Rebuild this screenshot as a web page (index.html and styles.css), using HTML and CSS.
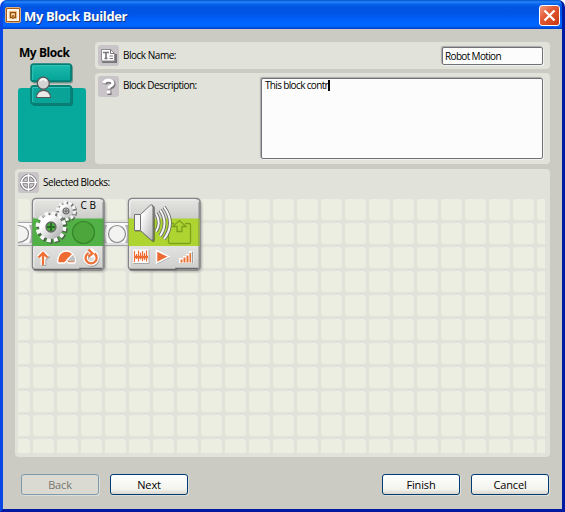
FILE: index.html
```html
<!DOCTYPE html>
<html lang="en">
<head>
<meta charset="utf-8">
<title>My Block Builder</title>
<link rel="stylesheet" href="styles.css">
</head>
<body>
<div class="window">
  <header class="titlebar">
    <svg class="app-icon" width="16" height="16" viewBox="0 0 16 16"><rect x=".5" y=".5" width="15" height="15" rx="1.5" fill="#a85b16" stroke="#dcae80"/><rect x="2.8" y="2.8" width="10.4" height="10.4" fill="#ffe1b1" stroke="#fff" stroke-width="1.5"/><path d="M7 10.500H5.500v-5h5v5H9M8 8v4" fill="none" stroke="#98500d" stroke-width="1.5"/></svg>
    <h1 class="title">My Block Builder</h1>
    <button class="close" aria-label="Close"><svg width="21" height="21" viewBox="0 0 21 21"><path d="M5.500 5.500l10 10M15.500 5.500l-10 10" stroke="#fff" stroke-width="2.2"/></svg></button>
  </header>
  <main class="content">
    <section class="top">
      <div class="preview">
        <h2 class="preview-name">My Block</h2>
        <div class="preview-tile">
          <svg class="preview-art" width="46" height="46" viewBox="0 0 46 46">
            <defs><linearGradient id="teal" x2="0" y2="1"><stop stop-color="#1cbcaf"/><stop offset="1" stop-color="#05a397"/></linearGradient></defs>
            <rect x="2" y="2" width="41" height="18.500" rx="3" fill="#52776f" opacity=".6"/><rect x="2" y="24" width="41" height="19" rx="3" fill="#085e58" opacity=".6"/>
            <rect x="1.200" y="1.200" width="40" height="17" rx="2.500" fill="url(#teal)" stroke="#087e75" stroke-width="2"/>
            <rect x="1.200" y="23" width="40" height="18" rx="2.500" fill="#0aa397" stroke="#087e75" stroke-width="2"/>
            <path d="M2.700 17V2.700H40M2.700 39V24.500H40" fill="none" stroke="#35c9bd" stroke-width=".9"/>
            <path d="M6.500 34.500c0-9.500 14-9.500 14 0z" fill="#e9e9e9" stroke="#555" stroke-width="1.200"/><circle cx="13.300" cy="20.200" r="6" fill="#d4d4d4" stroke="#555" stroke-width="1.200"/><path d="M10 18q3-4 6.500 0" stroke="#f5f5f5" stroke-width="2" fill="none"/>
          </svg>
        </div>
      </div>
      <div class="fields">
        <div class="panel name-panel">
          <span class="icon-box"><svg width="21" height="21" viewBox="0 0 21 21"><path d="M4 17h14V9" fill="none" stroke="#77747a" stroke-width="2"/><path d="M3.500 4.500h9l4 4v7.500h-13z" fill="#fff" stroke="#918e91"/><path d="M12.500 4.500v4h4" fill="none" stroke="#77757a"/><path d="M5 7.500h6M8 7v6.500M6.500 13.500h3" fill="none" stroke="#77757a" stroke-width="1.600"/><path d="M11.500 11h3.500M11.500 13.500h3.500" stroke="#77757a"/></svg></span>
          <label class="label" for="name">Block Name:</label>
          <input class="name-input" id="name" value="Robot Motion">
        </div>
        <div class="panel desc-panel">
          <span class="icon-box"><svg width="21" height="21" viewBox="0 0 21 21"><path d="M6.800 8.300q.3-3 4.300-3t4.200 2.700q0 2-2.300 2.800-1.500.7-1.500 2.700M9.500 16.700h4" fill="none" stroke="#77747a" stroke-width="4.600"/><path d="M5.900 7.300q.3-3 4.500-3t4.500 2.800q0 2-2.600 3-1.700.8-1.700 2.600M8.800 16h3.600" fill="none" stroke="#fff" stroke-width="3"/></svg></span>
          <label class="label desc-label" for="desc">Block Description:</label>
          <div class="desc-input" id="desc">This block contr<span class="caret"></span></div>
        </div>
      </div>
    </section>
    <section class="panel selected-panel">
      <div class="selected-head">
        <span class="icon-box"><svg width="21" height="21" viewBox="0 0 21 21"><g fill="none" stroke="#77747a" stroke-width="3.200"><circle cx="10.500" cy="10.500" r="7"/><path d="M10.500 2v17M2 10.500h17"/></g><g fill="none" stroke="#fff" stroke-width="1.600"><circle cx="10.500" cy="10.500" r="7"/><path d="M10.500 2v17M2 10.500h17"/></g></svg></span>
        <span class="label">Selected Blocks:</span>
      </div>
      <div class="board">
        <svg class="program" width="190" height="80" viewBox="18 196 190 80">
          <defs>
            <linearGradient id="face" x2="0" y2="1"><stop stop-color="#e6e6e4"/><stop offset=".28" stop-color="#cdcdca"/><stop offset=".65" stop-color="#e3e3e1"/><stop offset="1" stop-color="#cececc"/></linearGradient>
            <linearGradient id="metal" x2="1" y2="1"><stop offset=".2" stop-color="#fff"/><stop offset="1" stop-color="#b4b4b6"/></linearGradient>
            <filter id="soft" x="-20%" y="-20%" width="150%" height="150%"><feGaussianBlur stdDeviation="1"/></filter>
          </defs>
          <path d="M18 222h14v24H18zM104 222h24v24h-24z" fill="#fafafa"/>
          <path d="M18 222.500h14M18 245.500h14M104 222.500h24M104 245.500h24" stroke="#a5a5a8"/>
          <path d="M18 244h14M104 244h24" stroke="#c8c8cc"/>
          <g fill="#f3f3f1" stroke="#8b8b8e" stroke-width="1.200"><path d="M18 225.500q10.500 1 10.500 8.500t-10.500 8.500"/><circle cx="117" cy="234" r="8.500"/></g>
          <path d="M32 225h-3q4 9 0 18h3zM104 225h3q-4 9 0 18h-3zM128 225h-3q4 9 0 18h3z" fill="#b5b5b8"/>

          <rect x="33" y="200" width="73" height="72" rx="5" fill="#777" opacity=".5" filter="url(#soft)"/>
          <rect x="32.500" y="198.500" width="71.500" height="71.500" rx="3.500" fill="url(#face)" stroke="#858588" stroke-width="1.400"/>
          <path d="M32.500 218.500H104V246H32.500z" fill="#52b146"/>
          <path d="M33.800 217V202q0-2.200 2-2.200h64" fill="none" stroke="#f7f7f7"/><path d="M33.800 247v20" stroke="#f3f3f3"/><path d="M34 269.500h46v-1h22" fill="none" stroke="#68686c" stroke-width="1.600"/><path d="M103 202v66" stroke="#77777a" stroke-width="1.500" opacity=".5"/>
          <circle cx="83.500" cy="232.500" r="11" fill="#4ca63c" stroke="#348629" stroke-width="1.200"/>
          <g transform="translate(66 211)">
            <circle r="8" cx=".9" cy=".9" fill="none" stroke="#4c4c4c" stroke-width="4.500" stroke-dasharray="3.826 1.200" stroke-dashoffset=".5" opacity=".7"/>
            <circle r="7.300" fill="#777"/><circle r="8.200" fill="none" stroke="#f7f7f7" stroke-width="3.600" stroke-dasharray="2.952 2.200"/>
            <circle r="7" fill="url(#metal)"/><circle r="3" fill="#c7c7c7" stroke="#666" stroke-width="1.200"/><path d="M-2 0h4M0-2v4" stroke="#666"/>
          </g>
          <g transform="translate(51 227)">
            <circle r="12.500" cx="1.200" cy="1.200" fill="none" stroke="#444" stroke-width="6" stroke-dasharray="4.745 1.800" stroke-dashoffset=".6" opacity=".7"/>
            <circle r="8.500" fill="none" stroke="#666" stroke-width="7.500"/><circle r="13" fill="none" stroke="#f7f7f7" stroke-width="4.800" stroke-dasharray="3.907 2.900"/>
            <circle r="8.500" fill="none" stroke="url(#metal)" stroke-width="6.800"/><circle r="5" fill="#51ad40" stroke="#666" stroke-width="1.300"/><path d="M-4 0h8M0-4v8" stroke="#276a25" stroke-width="2"/>
          </g>
          <text class="ports" x="80.500" y="208.500">C B</text>
          <g fill="none" stroke="#777" opacity=".5" stroke-width="4.500" transform="translate(1 1)"><path d="M43 265v-11M38.500 257.500l4.500-4.500 4.500 4.500"/><path d="M88 253.500a5.500 5.500 0 1 0 7 1"/></g>
          <g stroke="#fff" stroke-width="4.800" fill="none" stroke-linejoin="round"><path d="M43 265v-11M38.500 257.500l4.500-4.500 4.500 4.500"/><path d="M88.500 253a5.500 5.500 0 1 0 6 .5M90 249.500l4 4-4 3"/></g>
          <g stroke="#ed7036" stroke-width="2.300" fill="none"><path d="M43 265v-11M38.500 257.500l4.500-4.500 4.500 4.500"/><path d="M88.500 253a5.500 5.500 0 1 0 6 .5M88.500 249.500l4 4-4 3"/></g>
          <path d="M57.500 261.500c.5-14 17-14 18 0l-1 1.500h-6l-2-2-2 2h-6z" fill="#ee6b33" stroke="#fff" stroke-width="1.400"/><path d="M69.500 257l3.500-2.500q2 3 2 7h-6l-1.500-1.500z" fill="#bfbfbf"/><path d="M66.500 260.500l6.500-6.500" stroke="#fff" stroke-width="1.400"/>

          <rect x="129" y="200" width="73" height="72" rx="5" fill="#777" opacity=".5" filter="url(#soft)"/>
          <rect x="128.500" y="198.500" width="71.500" height="71.500" rx="3.500" fill="url(#face)" stroke="#858588" stroke-width="1.400"/>
          <path d="M128.500 218.500H200V246h-71.500z" fill="#add430"/>
          <path d="M129.800 217V202q0-2.200 2-2.200h64" fill="none" stroke="#f7f7f7"/><path d="M129.800 247v20" stroke="#f3f3f3"/><path d="M130 269.500h46v-1h22" fill="none" stroke="#68686c" stroke-width="1.600"/><path d="M199 202v66" stroke="#77777a" stroke-width="1.500" opacity=".5"/>
          <path d="M174 223.500h-4q-1.500 0-1.500 1.500v17q0 1.500 1.500 1.500h19q1.500 0 1.500-1.500v-17q0-1.500-1.500-1.500h-4M177 231.500v-5h-4.500l7-6 6.500 6h-4v5z" fill="none" stroke="#7c9f1c" stroke-width="1.300"/>
          <path d="M134 214.500h6l11-10q3 0 3 3v32q-1 3-3 1l-11-10h-6z" transform="translate(1 1)" fill="#494b42" opacity=".6"/>
          <path d="M134.500 214.500h6v16h-6z" fill="#f3f3f3" stroke="#727276"/><path d="M140.500 214.500l10-9.500q2.500-1 2.500 2v31q0 3-2.500 1.500l-10-9z" fill="url(#metal)" stroke="#727276"/>
          <g fill="none"><path d="M156 213.500q5.500 9.500 0 18M160 210q9 13 0 26M164 207q12 16 0 32" stroke="#696b65" stroke-width="3.700"/><path d="M156 213.500q5.500 9.500 0 18M160 210q9 13 0 26M164 207q12 16 0 32" stroke="#f5f5f5" stroke-width="2"/></g>
          <path d="M133.500 250h16v14h-16z" fill="#8c8c8c" opacity=".6"/><path d="M133 249.500h15.500v13.500H133z" fill="#fff"/><path d="M134.500 251v11M136.500 254v5M138.500 250.500v11M140.500 252.500v7M142.500 251v10M144.500 253v7M146.500 250.500v11" stroke="#ee6b32" stroke-width="1.200"/><path d="M134 257h14" stroke="#ee6b32" stroke-width="2.500"/>
          <path d="M157.500 251.500v12l12-6z" fill="#777" stroke="#777" opacity=".6"/><path d="M156.500 250.500v12.500l12.500-6.300z" fill="#eb6b35" stroke="#fff" stroke-width="1.500"/>
          <path d="M179 258h4v-2h3v-2h3v-3h5v12h-15z" fill="#fff"/><path d="M180.500 259.500h2v3h-2zm3-2h2v5h-2zm3-2h2v7h-2zm3-2.500h1.500v9.500h-1.500z" fill="#e97036"/><path d="M192.500 251.500v11.500" stroke="#a1a1a1" stroke-width="1.500"/>
        </svg>
      </div>
    </section>
    <footer class="buttons">
      <button class="btn" disabled>Back</button>
      <button class="btn next">Next</button>
      <button class="btn finish">Finish</button>
      <button class="btn">Cancel</button>
    </footer>
  </main>
</div>
</body>
</html>
```
FILE: styles.css
```css
* { box-sizing: border-box; }
body { margin: 0; overflow: hidden; background: #fff; font: 10px/14px "Open Sans", sans-serif; color: #000; }
button, input { font: inherit; color: inherit; }
h1, h2 { margin: 0; }
svg { display: block; flex: none; }

.window { width: 565px; height: 512px; border: solid; border-width: 0 3px 3px; border-color: #0831d9 #001ca5 #0019a3 #0847e5; border-radius: 7px 7px 0 0; overflow: hidden; background: #0054e3; }
.titlebar { height: 29px; padding: 1px 2px 0; display: flex; align-items: center; background: linear-gradient(#0050cb 0, #2685fa 2px, #0865ed 4px, #0054e3 7px, #0055e7 14px, #0061fb 20px, #0066ff 26px, #004bdc 28px, #003bc2 29px); }
.title { margin: 2px 0 0 3px; font: bold 13px/18px "Open Sans", sans-serif; letter-spacing: -.36px; color: #fff; text-shadow: 1px 1px #103789; }
.close { width: 21px; height: 21px; padding: 0; margin-left: auto; border: 1px solid #fff; border-radius: 3px; background: linear-gradient(135deg, #f09a81, #e35a35 40%, #c9370e); }
.close svg { margin: -1px; }
.content { height: 480px; background: #cbcbc3; padding: 13px 12px 0; }

.top { display: flex; height: 122px; }
.preview { width: 71px; margin-right: 9px; padding: 2px 0 0 3px; }
.preview-name { height: 19px; margin-left: 1px; font: bold 12px/17px "Open Sans", sans-serif; letter-spacing: -.45px; white-space: nowrap; }
.preview-tile { width: 68px; height: 74px; margin-top: 25px; border-radius: 3px; background: #07a99d; }
.preview-art { position: relative; top: -25px; margin-left: 12px; }

.fields { width: 455px; }
.panel { background: #e1e2da; border-radius: 4px; }
.name-panel { display: flex; height: 27px; padding: 3px 7px 0 3px; }
.desc-panel { display: flex; height: 91px; margin-top: 4px; padding: 3px 7px 0 3px; }
.icon-box { width: 21px; height: 21px; flex: none; border-radius: 3px; background: #c9c4c7; }
.label { margin-left: 4px; line-height: 20px; letter-spacing: -.48px; white-space: nowrap; }
.desc-label { line-height: 19px; letter-spacing: -.56px; }
.name-input, .desc-input { margin: 2px 0 0 auto; padding: 0 3px; border: 1px solid #70717a; border-radius: 2px; background: #fcfcfc; box-shadow: -1px -1px 1px #aaaba6, 1px 1px #f1f2eb; letter-spacing: -.65px; }
.name-input { width: 101px; height: 18px; padding-left: 2px; }
.desc-input { width: 282px; height: 81px; line-height: 13px; }
.caret { display: inline-block; width: 2px; height: 11px; background: #000; vertical-align: -2px; }

.selected-panel { height: 288px; margin-top: 5px; padding: 3px 5px 0 3px; }
.selected-head { display: flex; height: 27px; }
.board { height: 254px; background: url("data:image/svg+xml,%3Csvg xmlns='http://www.w3.org/2000/svg' width='24' height='24'%3E%3Crect width='21' height='21' rx='3' fill='%23edeee2'/%3E%3C/svg%3E") -9px 0 / 24px 24px; }
.program { position: relative; top: -3px; }
.ports { font: 10px "Open Sans", sans-serif; }

.buttons { display: flex; margin: 17px 1px 0 6px; }
.btn { width: 78px; height: 21px; padding: 0; border: 1px solid #003c74; border-radius: 3px; background: linear-gradient(#fff, #f3f3ee 75%, #d9d7cd); box-shadow: 1px 1px #deded8; font-size: 11px; line-height: 18px; letter-spacing: -.15px; }
.btn:disabled { border-color: #7e9bad; background: #dadad2; color: #77776f; }
.next { margin-left: 11px; }
.finish { margin: 0 11px 0 auto; }
```
